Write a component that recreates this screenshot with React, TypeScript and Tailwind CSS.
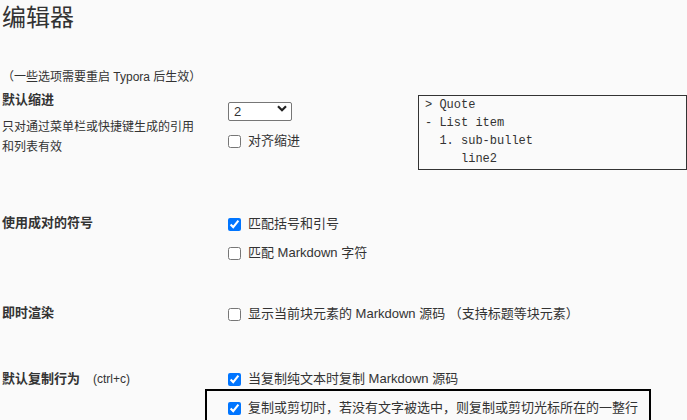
const font = { fontFamily: '"Liberation Sans", "Noto Sans CJK SC", sans-serif' }

function Check({ label, checked }: { label: React.ReactNode; checked?: boolean }) {
  return (
    <label className="flex items-center gap-[7px] h-[20px] text-[13px] leading-[20px]">
      <input type="checkbox" defaultChecked={checked} className="m-0 w-[13px] h-[13px] flex-shrink-0" />
      <span>{label}</span>
    </label>
  )
}

export default function App() {
  return (
    <div className="min-h-screen bg-[#fafafa] text-[#333] pl-[2px] overflow-hidden" style={font}>
      {/* Title */}
      <h1 className="text-[24px] leading-[30px] pt-[3px]">编辑器</h1>
      <p className="mt-[34px] text-[12px] leading-[20px]">（一些选项需要重启 Typora 后生效）</p>

      {/* 默认缩进 */}
      <div className="flex mt-[3px]">
        <div className="w-[226px] flex-shrink-0">
          <div className="text-[13px] leading-[20px] font-bold">默认缩进</div>
          <div className="mt-[7px] text-[12px] leading-[20px]">
            只对通过菜单栏或快捷键生成的引用
            <br />
            和列表有效
          </div>
        </div>
        <div className="w-[190px] flex-shrink-0">
          <div className="relative mt-[9px] w-[64px] h-[19px]">
            <select
              defaultValue="2"
              className="appearance-none w-full h-full border border-[#767676] bg-white text-[13px] leading-[17px] pl-[5px] rounded-[2px] outline-none"
            >
              <option value="1">1</option>
              <option value="2">2</option>
              <option value="3">3</option>
              <option value="4">4</option>
            </select>
            <svg className="absolute right-[5px] top-[6px] w-[10px] h-[7px] pointer-events-none" viewBox="0 0 10 7">
              <path d="M1 1.2 L5 5.2 L9 1.2" fill="none" stroke="#222" strokeWidth="2.2" />
            </svg>
          </div>
          <div className="mt-[13px]">
            <Check label="对齐缩进" />
          </div>
        </div>
        <div className="mt-[5px] w-[269px] h-[75px] border border-[#333] bg-[#fafafa] pl-[6px] font-mono text-[12px] leading-[18px] whitespace-pre" style={{ fontFamily: '"Liberation Mono", monospace' }}>
          {'> Quote\n- List item\n  1. sub-bullet\n     line2'}
        </div>
      </div>

      {/* 使用成对的符号 */}
      <div className="flex mt-[43px]">
        <div className="w-[226px] flex-shrink-0 text-[13px] leading-[20px] font-bold">使用成对的符号</div>
        <div className="pt-[1px] flex flex-col gap-[9px]">
          <Check label="匹配括号和引号" checked />
          <Check label="匹配 Markdown 字符" />
        </div>
      </div>

      {/* 即时渲染 */}
      <div className="flex mt-[40px]">
        <div className="w-[226px] flex-shrink-0 text-[13px] leading-[20px] font-bold">即时渲染</div>
        <div className="pt-[1px]">
          <Check label="显示当前块元素的 Markdown 源码 （支持标题等块元素）" />
        </div>
      </div>

      {/* 默认复制行为 */}
      <div className="flex mt-[45px]">
        <div className="w-[226px] flex-shrink-0 text-[13px] leading-[20px]">
          <span className="font-bold">默认复制行为</span>
          <span className="ml-[13px] text-[12px]">(ctrl+c)</span>
        </div>
        <div>
          <Check label="当复制纯文本时复制 Markdown 源码" checked />
          <div className="-ml-[23px] w-[446px] border-2 border-black pl-[21px] pt-[7px] pb-[8px]">
            <Check label="复制或剪切时，若没有文字被选中，则复制或剪切光标所在的一整行" checked />
          </div>
        </div>
      </div>
    </div>
  )
}
